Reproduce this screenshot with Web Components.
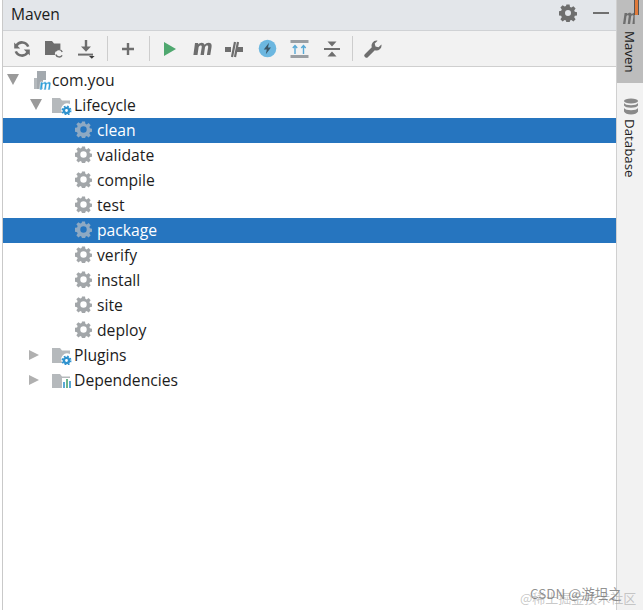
<!DOCTYPE html>
<html><head><meta charset="utf-8">
<style>
html,body{margin:0;padding:0;background:#fff}
body{width:643px;height:610px;overflow:hidden;position:relative;font-family:"Open Sans","Noto Sans CJK SC",sans-serif;color:#1a1a1a}
</style></head><body>
<template id="t-app"><style>
:host{display:grid;grid-template-columns:3px 1fr 26px;width:643px;height:610px}
.edge{background:#fff;border-right:1px solid #c9c9c9;box-sizing:border-box}
main{display:flex;flex-direction:column;min-width:0;border-right:1px solid #d0d0d0}
</style><div class="edge"></div><main><slot name="main"></slot></main><slot name="side"></slot></template>

<template id="t-title"><style>
:host{display:flex;align-items:center;height:30px;background:#e3e6ea;border-bottom:1px solid #d0d2d5;font-size:15.6px;padding-left:8px;padding-right:7px;color:#1c1c1c;box-sizing:content-box}
.s{flex:1}
.t{margin-bottom:2px}
svg{display:block;margin-bottom:4px}
</style><span class="t">Maven</span><span class="s"></span>
<svg width="18" height="18" viewBox="0 0 18 18" style="margin-right:16px"><path fill="#6e6e6e" fill-rule="evenodd" d="M7.400 .6h3.200l.4 2.400 1.400.6 2-1.400 2.200 2.200-1.400 2 .6 1.400 2.400.4v3.200l-2.400.4-.6 1.400 1.400 2-2.200 2.200-2-1.400-1.400.6-.4 2.400H7.400l-.4-2.400-1.400-.6-2 1.400-2.200-2.200 1.400-2-.6-1.400-2.400-.4V7.200l2.400-.4.6-1.400-1.400-2 2.200-2.200 2 1.400 1.400-.6zM9 6a3 3 0 1 0 0 6 3 3 0 0 0 0-6z"/></svg>
<svg width="16" height="18" viewBox="0 0 16 18"><rect y="8" width="16" height="2" fill="#707070"/></svg></template>

<template id="t-toolbar"><style>
:host{display:flex;align-items:center;height:35px;background:#f2f2f2;border-bottom:1px solid #cfcfcf;padding-left:3px}
</style><slot></slot></template>

<template id="t-tool"><style>
:host{display:flex;width:32px;height:24px;align-items:center;justify-content:center;flex:none}
</style><slot></slot></template>

<template id="t-sep"><style>
:host{display:block;width:1px;height:25px;background:#cdcdcd;margin:0 4px 0 5px;flex:none}
</style></template>

<template id="t-tree"><style>
:host{display:block;padding-top:1px;flex:1;background:#fff}
</style><slot></slot></template>

<template id="t-row"><style>
:host{display:flex;align-items:center;height:25px;box-sizing:border-box;padding-bottom:2px;font-size:15.7px;color:#1c1c1c;white-space:nowrap;padding-left:var(--pad,0px);--gear:#a2a6a9}
:host([selected]){background:#2675bf;color:#fff;--gear:#8ea9c3}
.ic{display:flex;align-items:center;justify-content:center;flex:none}
</style><span class="ic"><slot name="icon"></slot></span><slot></slot></template>

<template id="t-gear"><style>
:host{display:flex;width:26px;box-sizing:border-box;padding-left:4px;align-items:center}
svg{display:block}
</style><svg width="17" height="17" viewBox="0 0 18 18"><path style="fill:var(--gear)" fill-rule="evenodd" d="M7.400 .6h3.200l.4 2.400 1.400.6 2-1.400 2.200 2.200-1.400 2 .6 1.400 2.400.4v3.200l-2.400.4-.6 1.400 1.400 2-2.200 2.200-2-1.400-1.400.6-.4 2.400H7.400l-.4-2.400-1.400-.6-2 1.400-2.200-2.200 1.400-2-.6-1.400-2.400-.4V7.200l2.400-.4.6-1.400-1.400-2 2.200-2.200 2 1.400 1.400-.6zM9 5.600a3.400 3.400 0 1 0 0 6.800 3.400 3.400 0 0 0 0-6.800z"/></svg></template>

<template id="t-side"><style>
:host{display:flex;flex-direction:column;background:#f2f2f2;position:relative;overflow:hidden}
</style><slot></slot></template>

<template id="t-sidetab"><style>
:host{display:flex;flex-direction:column;align-items:center;font-size:13.300px;color:#1c1c1c}
:host([active]){background:#bdbdbd;height:83px}
span{writing-mode:vertical-rl;line-height:22px}
</style><slot name="icon"></slot><span><slot></slot></span></template>

<template id="t-mark"><style>
:host{position:absolute;right:0;bottom:0;width:140px;height:30px;pointer-events:none;font-size:13px;line-height:16px;font-family:"Noto Sans CJK SC",sans-serif}
div{position:absolute;white-space:nowrap}
.a{left:27px;bottom:9px;font-size:13.500px;color:rgba(110,110,110,.75)}
.b{left:17px;bottom:4px;color:rgba(170,170,170,.65)}
</style><div class="b">@稀土掘金技术社区</div><div class="a">CSDN @游坦之</div></template>

<app-shell>
  <title-bar slot="main"></title-bar>
  <tool-bar slot="main">
    <tool-btn><svg width="18" height="18" viewBox="0 0 18 18" fill="none" stroke="#6e6e6e" stroke-width="2.600"><path d="M15.200 6.600A6.600 6.600 0 0 0 3.400 5.600"/><path d="M2.800 11.400a6.600 6.600 0 0 0 11.800 1"/><path fill="#6e6e6e" stroke="none" d="M1.200 2.400v6h6zM16.800 15.600v-6h-6z"/></svg></tool-btn>
    <tool-btn><svg width="20" height="18" viewBox="0 0 20 18"><path fill="#6e6e6e" d="M1 1h7l2 2.600h6.400V9a5 5 0 0 0-5.400 6H1z"/><g fill="none" stroke="#6e6e6e" stroke-width="1.400"><path d="M18.200 12a3.500 3.500 0 0 0-6.300-.8"/><path d="M11.800 14.500a3.500 3.500 0 0 0 6.300.8"/></g></svg></tool-btn>
    <tool-btn><svg width="18" height="20" viewBox="0 0 18 20"><path fill="#6e6e6e" d="M7.800 1h2.400v6.500h3.800L9 12.800 4 7.500h3.800z"/><rect x="1" y="14.600" width="15" height="2" fill="#6e6e6e"/><path fill="#3a3a3a" d="M12 17h5.600l-2.800 2.800z"/></svg></tool-btn>
    <tool-sep></tool-sep>
    <tool-btn><svg width="14" height="14" viewBox="0 0 14 14"><path fill="#6e6e6e" d="M5.800 1h2.400v4.800H13v2.400H8.200V13H5.800V8.200H1V5.800h4.800z"/></svg></tool-btn>
    <tool-sep></tool-sep>
    <tool-btn><svg width="14" height="16" viewBox="0 0 14 16"><path fill="#4fa86f" d="M1 1l12 7-12 7z"/></svg></tool-btn>
    <tool-btn><svg width="21" height="15" viewBox="0 0 21 15"><path fill="#6e6e6e" d="M3 2h3.200l-.2 1.600C7 2.500 8.200 1.800 9.700 1.800c1.500 0 2.500.7 2.800 2C13.700 2.500 15 1.800 16.500 1.800c2.400 0 3.500 1.600 3.100 4L18.300 14h-3.400l1.200-7.600c.2-1.200-.1-1.800-1-1.800-.9 0-1.700.6-2.100 1.700L11.900 14H8.500l1.200-7.600c.2-1.200-.1-1.800-1-1.800-.9 0-1.700.6-2.100 1.700L5.500 14H1.400z"/></svg></tool-btn>
    <tool-btn><svg width="20" height="20" viewBox="0 0 20 20"><path fill="#6e6e6e" d="M1 8h6v5H1zM13 8h6v5h-6z"/><path stroke="#6e6e6e" stroke-width="2.200" d="M11 3 8 18M14 3 11 18"/></svg></tool-btn>
    <tool-btn style="margin-left:1px"><svg width="19" height="19" viewBox="0 0 19 19"><circle cx="9.500" cy="9.500" r="8.800" fill="#6cb7e0"/><path fill="#3a5566" d="M11 3.800 5.800 10.500h3l-1 4.700 5.200-6.700h-3z"/></svg></tool-btn>
    <tool-btn><svg width="19" height="18" viewBox="0 0 19 18"><rect x=".5" y="0" width="18" height="3" fill="#9a9ea2"/><rect x=".5" y="15" width="18" height="3" fill="#9a9ea2"/><g stroke="#57a9d6" stroke-width="1.400" fill="none"><path d="M5 14V6M2.800 8 5 5.500 7.200 8"/><path d="M13.500 14V6M11.300 8l2.200-2.500L15.700 8"/></g></svg></tool-btn>
    <tool-btn style="margin-left:1px"><svg width="16" height="16" viewBox="0 0 16 16"><path fill="#6e6e6e" d="M3.500 .5h9L8 5.500zM3.500 15.500h9L8 10.500z"/><rect y="7" width="16" height="2" fill="#6e6e6e"/></svg></tool-btn>
    <tool-sep style="margin:0 4px"></tool-sep>
    <tool-btn><svg width="18" height="18" viewBox="0 0 18 18"><path fill="#6e6e6e" d="M12.600.6a5 5 0 0 0-4.800 6.600L.8 14.200a1.800 1.800 0 0 0 0 2.500l.5.500a1.800 1.800 0 0 0 2.500 0l7-7A5 5 0 0 0 17.400 4.500L14.500 7.300l-3-.9-.8-3L13.600.7a5 5 0 0 0-1-.1z"/></svg></tool-btn>
  </tool-bar>
  <tree-view slot="main">
    <tree-row style="--pad:3px">
      <svg slot="icon" width="46" height="20" viewBox="0 0 46 20" style="overflow:visible"><path fill="#9a9a9a" d="M1 4h12L7 15z"/><path fill="#b4b9bd" d="M28 8h3v11h-3z"/><path fill="#a3a9ae" d="M31 1h9v9h-3v9h-6z"/><path fill="#2f9fd8" stroke="#fff" stroke-width=".6" d="M34.500 12h2.200v1c.7-.8 1.500-1.200 2.300-1.200.9 0 1.500.4 1.700 1.200.7-.8 1.500-1.200 2.400-1.200 1.400 0 2 .9 1.800 2.300L44 20h-2.200l.8-5.300c.1-.7-.1-1-.6-1s-1 .4-1.200 1L40 20h-2.200l.8-5.300c.1-.7-.1-1-.6-1s-1 .4-1.200 1L36 20h-2.300z"/></svg>
      <span>com.you</span>
    </tree-row>
    <tree-row style="--pad:24px">
      <svg slot="icon" width="47" height="20" viewBox="0 0 47 20"><path fill="#9a9a9a" d="M3 4h12L9 15z"/><path fill="#b5b9bc" d="M25 3h8l2 2.500h8V9a6 6 0 0 0-7.500 9H25z"/><circle cx="39.500" cy="15.500" r="2.600" fill="none" stroke="#2f93cf" stroke-width="2.400"/><circle cx="39.500" cy="15.500" r="4.300" fill="none" stroke="#2f93cf" stroke-width="1.400" stroke-dasharray="1.700 1.700"/></svg>
      <span>Lifecycle</span>
    </tree-row>
    <tree-row selected style="--pad:68px"><gear-icon slot="icon"></gear-icon>clean</tree-row>
    <tree-row style="--pad:68px"><gear-icon slot="icon"></gear-icon>validate</tree-row>
    <tree-row style="--pad:68px"><gear-icon slot="icon"></gear-icon>compile</tree-row>
    <tree-row style="--pad:68px"><gear-icon slot="icon"></gear-icon>test</tree-row>
    <tree-row selected style="--pad:68px"><gear-icon slot="icon"></gear-icon>package</tree-row>
    <tree-row style="--pad:68px"><gear-icon slot="icon"></gear-icon>verify</tree-row>
    <tree-row style="--pad:68px"><gear-icon slot="icon"></gear-icon>install</tree-row>
    <tree-row style="--pad:68px"><gear-icon slot="icon"></gear-icon>site</tree-row>
    <tree-row style="--pad:68px"><gear-icon slot="icon"></gear-icon>deploy</tree-row>
    <tree-row style="--pad:24px">
      <svg slot="icon" width="47" height="20" viewBox="0 0 47 20"><path fill="#b0b0b0" d="M2 5l10 5-10 5z"/><path fill="#b5b9bc" d="M25 3h8l2 2.500h8V9a6 6 0 0 0-7.500 9H25z"/><circle cx="39.500" cy="15.500" r="2.600" fill="none" stroke="#2f93cf" stroke-width="2.400"/><circle cx="39.500" cy="15.500" r="4.300" fill="none" stroke="#2f93cf" stroke-width="1.400" stroke-dasharray="1.700 1.700"/></svg>
      <span>Plugins</span>
    </tree-row>
    <tree-row style="--pad:24px">
      <svg slot="icon" width="47" height="20" viewBox="0 0 47 20"><path fill="#b0b0b0" d="M2 5l10 5-10 5z"/><path fill="#b5b9bc" d="M25 4h8l2 2.500h8V8h-8v10H25z"/><rect x="36" y="12" width="2" height="6" fill="#5aa9d6"/><rect x="39" y="9" width="2" height="9" fill="#6cb58b"/><rect x="42" y="11" width="2" height="7" fill="#5aa9d6"/></svg>
      <span>Dependencies</span>
    </tree-row>
  </tree-view>
  <side-bar slot="side">
    <side-tab active>
      <svg slot="icon" width="26" height="25" viewBox="0 0 26 25" style="display:block"><path fill="#6e6e6e" d="M6 24l1.600-11h2.600l-.2 1.300c.8-1 1.800-1.500 2.700-1.500 1.100 0 1.800.5 2.100 1.500.9-1 1.800-1.500 2.900-1.500V24h-2.300l1-7.500c.1-.9-.2-1.300-.8-1.300-.7 0-1.300.5-1.500 1.300l-1 7.500h-2.400l1-7.500c.1-.9-.2-1.300-.8-1.300-.7 0-1.300.5-1.500 1.300l-1 7.500z"/><path d="M19.500 0v15" fill="none" stroke="#555" stroke-width="5"/><path d="M19.500 0v15" fill="none" stroke="#e07a3a" stroke-width="3"/></svg>
      <span style="display:block;padding-top:6px">Maven</span>
    </side-tab>
    <side-tab>
      <svg slot="icon" width="16" height="17" viewBox="0 0 16 17" style="display:block;margin-top:15px;margin-left:2px"><g fill="#8a8a8a"><ellipse cx="8" cy="3" rx="7" ry="2.500"/><path d="M1 5c1 1.500 3.500 2.200 7 2.200S14 6.500 15 5v2.500c-1 1.500-3.500 2.200-7 2.200S2 9 1 7.500zM1 10c1 1.500 3.500 2.200 7 2.200s6-.7 7-2.200v3.500c-1 2-3.500 3-7 3s-6-1-7-3z"/></g></svg>
      <span style="display:block;padding-top:4px">Database</span>
    </side-tab>
  </side-bar>
</app-shell>
<water-mark></water-mark>
<script>
const def=(n,id)=>customElements.define(n,class extends HTMLElement{
  constructor(){super();this.attachShadow({mode:'open'}).appendChild(document.getElementById(id).content.cloneNode(true));}
});
def('app-shell','t-app');
def('title-bar','t-title');
def('tool-bar','t-toolbar');
def('tool-btn','t-tool');
def('tool-sep','t-sep');
def('tree-view','t-tree');
def('tree-row','t-row');
def('gear-icon','t-gear');
def('side-bar','t-side');
def('side-tab','t-sidetab');
def('water-mark','t-mark');
</script>
</body></html>
